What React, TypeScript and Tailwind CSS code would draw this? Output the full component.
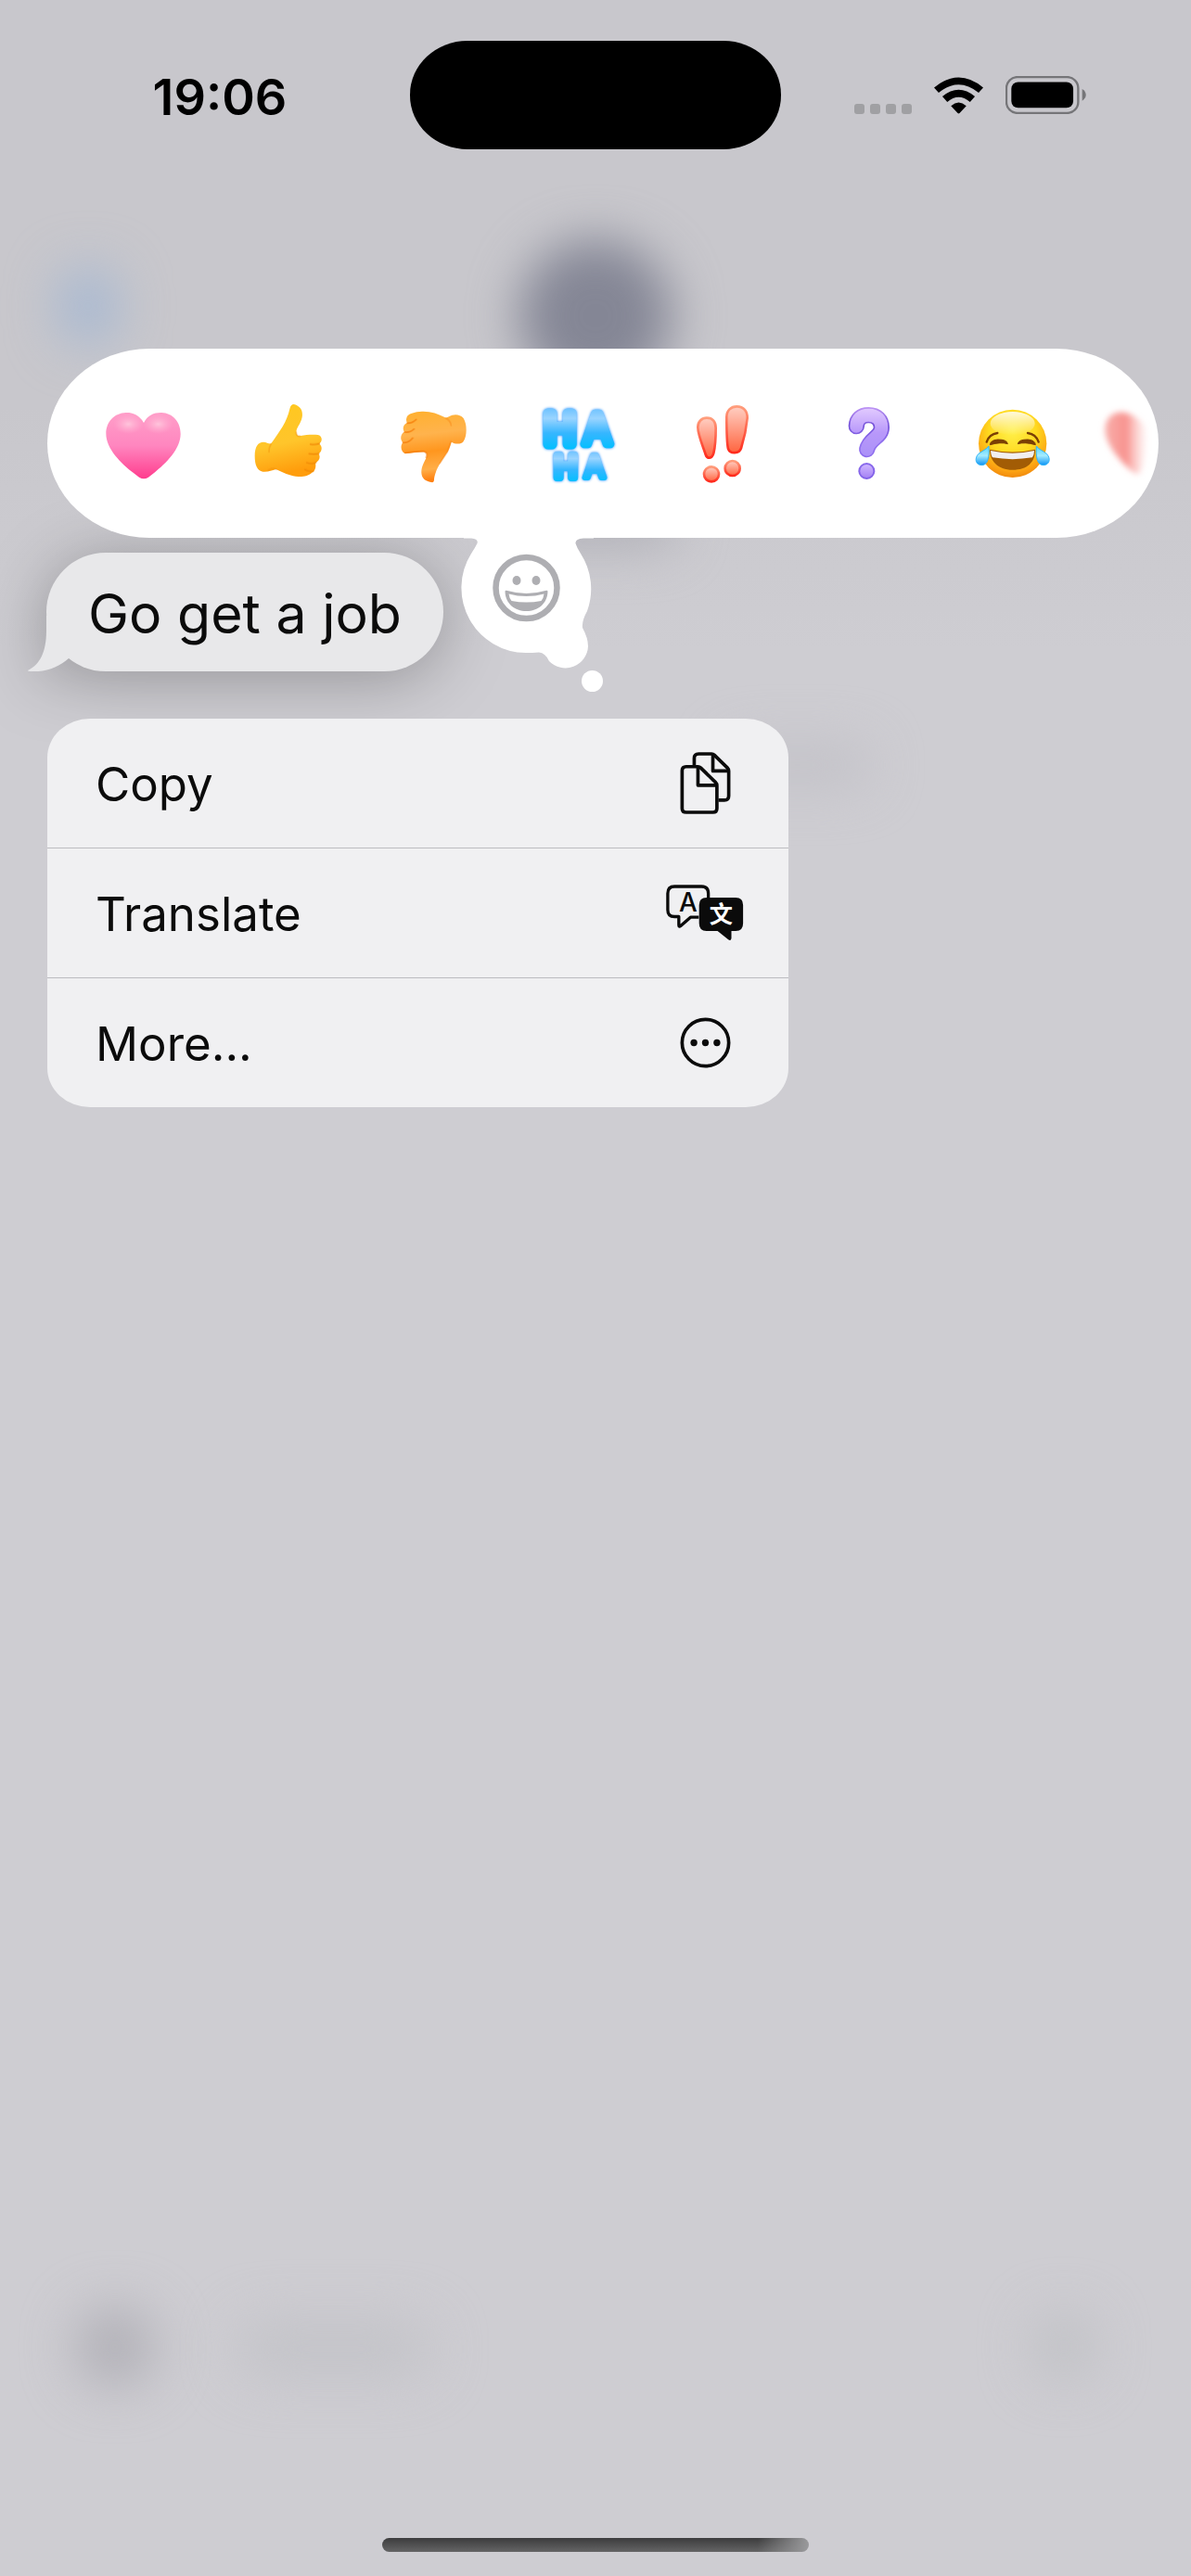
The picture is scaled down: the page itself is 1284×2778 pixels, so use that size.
import type { ReactNode } from "react";

const GlyphFrame = ({ viewBox, children }: { viewBox: string; children: ReactNode }) => (
  <svg viewBox={viewBox} className="h-[88px] w-20 overflow-visible" aria-hidden="true">
    {children}
  </svg>
);

const Heart = () => (
  <GlyphFrame viewBox="225 198 240 264">
    <defs>
      <linearGradient id="heartFill" x1="0" y1="0" x2="0" y2="1">
        <stop offset="0" stopColor="#ff9fc9" />
        <stop offset="0.5" stopColor="#ff86bf" />
        <stop offset="1" stopColor="#ff3d8e" />
      </linearGradient>
      <radialGradient id="heartShine">
        <stop offset="0" stopColor="#ffc4dc" />
        <stop offset="1" stopColor="#ffb0d2" stopOpacity="0" />
      </radialGradient>
    </defs>
    <path
      d="M345 258C330 230 305 224 287 225C250 226 223 255 223 293C223 350 290 405 330 434Q345 443 360 434C400 405 465 350 464 293C464 255 438 226 403 225C380 224 358 232 345 258Z"
      fill="url(#heartFill)"
    />
    <ellipse cx="295" cy="262" rx="48" ry="32" fill="url(#heartShine)" />
    <ellipse cx="392" cy="262" rx="48" ry="32" fill="url(#heartShine)" />
  </GlyphFrame>
);

const ThumbUp = () => (
  <GlyphFrame viewBox="693 198 240 264">
    <defs>
      <linearGradient id="thumbUpFill" x1="0" y1="0" x2="0.2" y2="1">
        <stop offset="0" stopColor="#ffc81f" />
        <stop offset="0.6" stopColor="#ffc52b" />
        <stop offset="1" stopColor="#ff9d0c" />
      </linearGradient>
    </defs>
    <path
      d="M757 325C785 285 808 255 817 213C820 198 828 195 838 200C855 208 860 222 857 240C853 262 838 272 838 290C840 300 846 302 852 300C870 296 895 296 908 297C922 299 925 318 912 326C924 332 922 352 910 358C917 366 915 380 900 388C903 400 899 415 890 418C880 430 860 433 845 432C815 430 795 418 772 408C760 412 745 418 730 416C712 412 704 395 704 365C704 335 715 320 732 320C742 320 750 327 757 325Z"
      fill="url(#thumbUpFill)"
    />
    <g fill="none" stroke="#f08a08" strokeWidth="5" strokeLinecap="round" opacity="0.8">
      <path d="M884 327Q900 329 913 325" />
      <path d="M880 358Q898 361 911 357" />
      <path d="M872 387Q888 394 902 386" />
      <path d="M866 409Q880 417 893 414" />
      <path d="M757 326Q749 338 750 352" opacity="0.5" />
      <path d="M748 411Q762 402 774 408" opacity="0.5" />
      <path d="M838 288Q838 302 850 301" opacity="0.6" />
    </g>
  </GlyphFrame>
);

const ThumbDown = () => (
  <GlyphFrame viewBox="234 198 240 264">
    <defs>
      <linearGradient id="thumbDownFill" x1="0" y1="0" x2="0.1" y2="1">
        <stop offset="0" stopColor="#ffb02e" />
        <stop offset="0.35" stopColor="#ffb34d" />
        <stop offset="0.6" stopColor="#ff961e" />
        <stop offset="0.85" stopColor="#ffae48" />
        <stop offset="1" stopColor="#ff8110" />
      </linearGradient>
    </defs>
    <path
      d="M393 241C370 228 345 220 318 221C295 222 270 228 268 242C266 248 267 254 270 259C256 262 254 280 261 287C248 293 246 312 256 322C248 330 248 350 262 357C280 357 305 352 322 351C332 351 336 358 333 368C325 385 315 400 316 420C317 438 330 447 347 450C355 452 357 447 357 440C360 410 385 375 401 352C408 338 411 325 413 320C425 328 445 328 452 318C464 300 464 262 452 243C440 228 418 229 405 238C400 241 396 242 393 241Z"
      fill="url(#thumbDownFill)"
    />
    <g fill="none" stroke="#f57c0a" strokeWidth="5" strokeLinecap="round" opacity="0.75">
      <path d="M270 259Q286 260 299 247" />
      <path d="M262 288Q280 290 292 278" />
      <path d="M257 322Q275 324 288 307" />
      <path d="M264 355Q300 350 322 350Q338 353 332 370" />
      <path d="M395 243Q411 252 412 266" opacity="0.5" />
      <path d="M412 318L400 352L376 388" opacity="0.5" />
    </g>
  </GlyphFrame>
);

const Haha = () => (
  <GlyphFrame viewBox="702 198 240 264">
    <defs>
      <linearGradient id="hahaTop" gradientUnits="userSpaceOnUse" x1="0" y1="210" x2="0" y2="345">
        <stop offset="0" stopColor="#6cc2ff" />
        <stop offset="0.25" stopColor="#9ad4ff" />
        <stop offset="0.6" stopColor="#36b6ff" />
        <stop offset="1" stopColor="#00c0ff" />
      </linearGradient>
      <linearGradient id="hahaBottom" gradientUnits="userSpaceOnUse" x1="0" y1="348" x2="0" y2="450">
        <stop offset="0" stopColor="#6cc2ff" />
        <stop offset="0.25" stopColor="#9ad4ff" />
        <stop offset="0.6" stopColor="#36b6ff" />
        <stop offset="1" stopColor="#00c0ff" />
      </linearGradient>
    </defs>
    <g
      className="font-['Inter',sans-serif] drop-shadow-[0_0_4px_#0a84ff]"
      textAnchor="middle"
      strokeLinejoin="round"
      strokeLinecap="round"
    >
      <text y="326" fontSize="134" fill="url(#hahaTop)" stroke="url(#hahaTop)" strokeWidth="33">
        <tspan x="764">H</tspan>
        <tspan x="885" strokeWidth="25">A</tspan>
      </text>
      <text y="436" fontSize="98" fill="url(#hahaBottom)" stroke="url(#hahaBottom)" strokeWidth="24">
        <tspan x="783">H</tspan>
        <tspan x="876" strokeWidth="18">A</tspan>
      </text>
    </g>
  </GlyphFrame>
);

const Exclaim = () => (
  <GlyphFrame viewBox="180 198 240 264">
    <defs>
      <linearGradient id="exFill" x1="0" y1="0" x2="0" y2="1">
        <stop offset="0" stopColor="#ffcfc3" />
        <stop offset="1" stopColor="#ff6540" />
      </linearGradient>
      <linearGradient id="exEdge" x1="0" y1="0" x2="0" y2="1">
        <stop offset="0" stopColor="#ff9d7c" />
        <stop offset="1" stopColor="#ff2a1c" />
      </linearGradient>
    </defs>
    <g fill="url(#exFill)" stroke="url(#exEdge)" strokeWidth="8">
      <path d="M249 242C268 242 278 255 278 275C278 310 275 340 271 356C266 375 250 376 245 360C236 333 220 295 220 272C220 255 232 242 249 242Z" />
      <path d="M346 205C368 205 381 220 380 243C377 275 367 318 360 340C354 358 325 360 318 342C313 320 313 270 313 240C313 218 327 205 346 205Z" />
      <circle cx="264" cy="424" r="24" />
      <circle cx="332" cy="405" r="24" />
    </g>
  </GlyphFrame>
);

const Question = () => (
  <GlyphFrame viewBox="648 198 240 264">
    <defs>
      <linearGradient id="qFill" gradientUnits="userSpaceOnUse" x1="0" y1="208" x2="0" y2="442">
        <stop offset="0" stopColor="#e3ccff" />
        <stop offset="0.35" stopColor="#b898fa" />
        <stop offset="0.7" stopColor="#aa90f8" />
        <stop offset="0.8" stopColor="#ccb2ff" />
        <stop offset="1" stopColor="#a07cf2" />
      </linearGradient>
      <linearGradient id="qEdge" gradientUnits="userSpaceOnUse" x1="0" y1="208" x2="0" y2="442">
        <stop offset="0" stopColor="#bd94f4" />
        <stop offset="0.25" stopColor="#7350d8" />
        <stop offset="0.5" stopColor="#9272f0" />
        <stop offset="1" stopColor="#8262e8" />
      </linearGradient>
    </defs>
    <g fill="none" strokeLinecap="round">
      <path d="M733 269C734 245 749 233 772 233C799 233 814 249 814 273C814 305 774 308 767 344" stroke="url(#qEdge)" strokeWidth="52" />
      <path d="M733 269C734 245 749 233 772 233C799 233 814 249 814 273C814 305 774 308 767 344" stroke="url(#qFill)" strokeWidth="42" />
    </g>
    <circle cx="766" cy="414" r="24" fill="url(#qFill)" stroke="url(#qEdge)" strokeWidth="6" />
  </GlyphFrame>
);

const Joy = () => (
  <GlyphFrame viewBox="216 228 240 264">
    <defs>
      <radialGradient id="joyFill" cx="0.5" cy="0.32" r="0.7">
        <stop offset="0" stopColor="#fff04a" />
        <stop offset="0.5" stopColor="#ffd91f" />
        <stop offset="0.85" stopColor="#fba012" />
        <stop offset="1" stopColor="#ee850c" />
      </radialGradient>
      <linearGradient id="joyShine" x1="0" y1="0" x2="0" y2="1">
        <stop offset="0" stopColor="#fff" stopOpacity="0.85" />
        <stop offset="1" stopColor="#fff" stopOpacity="0" />
      </linearGradient>
      <linearGradient id="tearFill" x1="0" y1="0" x2="0" y2="1">
        <stop offset="0" stopColor="#4fd4ff" />
        <stop offset="0.5" stopColor="#a5ecff" />
        <stop offset="1" stopColor="#0a93f5" />
      </linearGradient>
    </defs>
    <circle cx="338" cy="355" r="110" fill="url(#joyFill)" />
    <ellipse cx="338" cy="290" rx="72" ry="38" fill="url(#joyShine)" />
    <g fill="none" stroke="#7a3f05" strokeLinecap="round" strokeWidth="7">
      <path d="M254 350Q262 325 289 321" />
      <path d="M422 350Q414 325 387 321" />
    </g>
    <path d="M265 359Q266 344 290 342Q320 342 322 356Q300 349 265 359Z" fill="#7a3f05" stroke="#7a3f05" strokeWidth="3" />
    <path d="M412 359Q411 344 387 342Q357 342 355 356Q377 349 412 359Z" fill="#7a3f05" stroke="#7a3f05" strokeWidth="3" />
    <path d="M264 374Q338 391 411 374C412 415 385 440 338 440C290 440 264 410 264 374Z" fill="#a25c05" />
    <path d="M267 378Q338 394 408 378Q408 393 402 400Q338 411 273 400Q268 394 267 378Z" fill="#f1eff0" />
    <path d="M261 363C263 395 260 425 238 425C217 424 214 402 228 388C240 378 254 374 261 363Z" fill="url(#tearFill)" stroke="#35b4f8" strokeWidth="3" />
    <path d="M415 363C413 395 416 425 438 425C459 424 462 402 448 388C436 378 422 374 415 363Z" fill="url(#tearFill)" stroke="#35b4f8" strokeWidth="3" />
  </GlyphFrame>
);

const FadingHeart = () => (
  <GlyphFrame viewBox="686 228 240 264">
    <defs>
      <linearGradient id="fadeX" gradientUnits="userSpaceOnUse" x1="640" y1="0" x2="775" y2="0">
        <stop offset="0" stopColor="#f8aeaa" />
        <stop offset="0.5" stopColor="#f8928e" />
        <stop offset="1" stopColor="#fbc5c3" stopOpacity="0.1" />
      </linearGradient>
      <filter id="softEdge" x="-40%" y="-40%" width="180%" height="180%">
        <feGaussianBlur stdDeviation="10" />
      </filter>
    </defs>
    <path
      d="M685 254C655 256 638 282 639 312C641 365 700 425 738 454C748 458 757 445 760 430C772 380 772 330 768 300C745 268 712 252 685 254Z"
      fill="url(#fadeX)"
      filter="url(#softEdge)"
    />
  </GlyphFrame>
);

const CopyIcon = () => (
  <svg viewBox="130 95 164 200" className="h-[67px] w-[55px]" fill="none" stroke="#0b0b0b" strokeWidth="11" strokeLinejoin="round" aria-hidden="true">
    <path d="M176 139V115Q176 101 190 101H232Q237 101 241 105L283 146Q287 150 287 156V236Q287 250 273 250H254" />
    <path d="M236 103V156H286" />
    <path d="M150 142H188Q193 142 197 146L245 193Q249 197 249 203V276Q249 289 236 289H150Q137 289 137 276V155Q137 142 150 142Z" />
    <path d="M188 143V202H248" />
  </svg>
);

const TranslateIcon = () => (
  <svg viewBox="87 526 252 184" className="h-[61px] w-[84px]" aria-hidden="true">
    <path
      d="M224 568V555Q224 532 202 532H114Q92 532 92 555V608Q92 630 114 630H128V657Q128 665 134 660L166 632H193"
      fill="none"
      stroke="#0b0b0b"
      strokeWidth="10"
      strokeLinejoin="round"
    />
    <text x="158" y="612" textAnchor="middle" fontSize="84" className="fill-[#0b0b0b] font-['Inter',sans-serif] font-medium">A</text>
    <path d="M218 568H313Q337 568 337 592V652Q337 677 313 677H299V700Q298 710 289 705L254 677H218Q194 677 194 652V592Q194 568 218 568Z" fill="#0b0b0b" />
    <text x="265" y="650" textAnchor="middle" fontSize="76" className="fill-white font-['Noto_Sans_CJK_SC',sans-serif] font-bold">文</text>
  </svg>
);

const MoreIcon = () => (
  <svg viewBox="130 951 164 164" className="h-[55px] w-[55px]" aria-hidden="true">
    <circle cx="212" cy="1033" r="75" fill="none" stroke="#0b0b0b" strokeWidth="11" />
    <g fill="#0b0b0b">
      <circle cx="175" cy="1033" r="11" />
      <circle cx="212" cy="1033" r="11" />
      <circle cx="249" cy="1033" r="11" />
    </g>
  </svg>
);

const ThoughtBubble = () => (
  <svg viewBox="490 576 170 172" className="h-[172px] w-[170px]" aria-hidden="true">
    <g fill="#fff">
      <path d="M500 576H640V580.5H629Q620 581 620.5 586Q622 591 626 597A70 70 0 0 1 633 659Q627 670 628 677Q634 688 634 697A24.500 24.500 0 0 1 592 713Q588 704 581 703.500Q574 704 567 704A70 70 0 0 1 508 597Q512 591 514.500 586Q516 581 508 580.500H500Z" />
      <circle cx="638.500" cy="734.500" r="11.500" />
    </g>
    <circle cx="567.500" cy="634" r="33" fill="none" stroke="#aeaeb2" strokeWidth="6.500" />
    <g fill="#aeaeb2">
      <ellipse cx="557" cy="626" rx="4.500" ry="5" />
      <ellipse cx="578" cy="626" rx="4.500" ry="5" />
      <path d="M544.500 638Q544.500 636 547 637Q567.500 643 588 637Q590.500 636 590.500 638C590 651 580 659 567.500 659C555 659 545 651 544.500 638Z" />
    </g>
    <path d="M548.500 640.500Q567.500 645.500 586.500 640.500Q586 645 583.500 648Q567.500 651 551.500 648Q549 645 548.500 640.500Z" fill="#fff" />
  </svg>
);

const reactions = [
  { label: "Love", icon: <Heart /> },
  { label: "Like", icon: <ThumbUp /> },
  { label: "Dislike", icon: <ThumbDown /> },
  { label: "Laugh", icon: <Haha /> },
  { label: "Emphasize", icon: <Exclaim /> },
  { label: "Question", icon: <Question /> },
  { label: "Tears of joy", icon: <Joy /> },
  { label: "Red heart", icon: <FadingHeart /> },
];

const actions = [
  { label: "Copy", icon: <CopyIcon /> },
  { label: "Translate", icon: <TranslateIcon /> },
  { label: "More...", icon: <MoreIcon /> },
];

const StatusBar = () => (
  <header className="grid h-[117px] grid-cols-[1fr_400px_1fr] items-center">
    <time className="mt-1 ml-8 justify-self-center text-[54px] leading-none font-semibold text-black">19:06</time>
    <div className="h-full rounded-[62px/58px] bg-black" />
    <div className="mr-[34px] flex items-end justify-self-center">
      <div className="mr-6 flex gap-[6px]">
        <i className="size-[11px] rounded-[3px] bg-[#a0a0a3]" />
        <i className="size-[11px] rounded-[3px] bg-[#a0a0a3]" />
        <i className="size-[11px] rounded-[3px] bg-[#a0a0a3]" />
        <i className="size-[11px] rounded-[3px] bg-[#a0a0a3]" />
      </div>
      <svg viewBox="320 70 160 120" className="mr-6 h-10 w-[53px]" aria-hidden="true">
        <path d="M320 104Q400 38 480 104L465 121Q400 68 335 121Z" />
        <path d="M347 133Q400 89 453 133L437 151Q400 119 363 151Z" />
        <path d="M375 164Q400 142 425 164L403 187Q400 190 397 187Z" />
      </svg>
      <svg viewBox="552 68 262 123" className="h-[41px] w-[87px]" aria-hidden="true">
        <rect x="555" y="71" width="233" height="117" rx="36" fill="none" stroke="#757578" strokeWidth="7" />
        <rect x="571" y="87" width="201" height="84" rx="22" />
        <path d="M801 110Q813 117 813 129Q813 141 801 148Z" fill="#757578" />
      </svg>
    </div>
  </header>
);

const Backdrop = () => (
  <div className="pointer-events-none absolute inset-0 overflow-hidden" aria-hidden="true">
    <div className="absolute top-[258px] left-1/2 size-[165px] -translate-x-1/2 rounded-full bg-[#848695] blur-[26px]" />
    <div className="absolute top-[290px] left-[65px] h-20 w-[60px] rounded-full bg-[#a2b6d2] blur-[28px]" />
    <div className="absolute top-[540px] left-[560px] h-[50px] w-[170px] rounded-full bg-[#b0b0b7] blur-[26px]" />
    <div className="absolute top-[800px] left-[780px] h-[50px] w-[160px] rounded-full bg-[#c3c2c8] blur-[26px]" />
    <div className="absolute bottom-[205px] left-[82px] size-[84px] rounded-full bg-[#afaeb5] blur-[28px]" />
    <div className="absolute bottom-[215px] left-[255px] h-[60px] w-[210px] rounded-full bg-[#c3c3c8] blur-[28px]" />
    <div className="absolute right-[105px] bottom-[212px] h-[70px] w-[64px] rounded-full bg-[#bfc0c4] blur-[28px]" />
  </div>
);

export default function App() {
  return (
    <div className="relative flex min-h-screen flex-col bg-[linear-gradient(#c8c7cc_0,#c8c7cc_440px,#cecdd2_700px)] pt-11 font-['Inter',sans-serif] text-[#0b0b0b]">
      <Backdrop />
      <div className="relative flex flex-1 flex-col">
        <StatusBar />

        <div className="relative z-10 mt-[215px] mr-[35px] ml-[51px] h-[204px] overflow-hidden rounded-[110px/102px] bg-white">
          <div className="flex h-full items-center pl-[26px]">
            {reactions.map(({ label, icon }) => (
              <button key={label} type="button" aria-label={label} className="flex w-[156px] shrink-0 justify-center pt-1">
                {icon}
              </button>
            ))}
          </div>
        </div>

        <main>
          <div className="flex items-start pl-[50px]">
            <div className="relative mt-4 flex h-32 items-center rounded-[64px] bg-[#e8e8ea] px-[45px] drop-shadow-[0_8px_34px_rgba(0,0,0,0.28)]">
              <svg viewBox="30 664 60 60" className="absolute bottom-0 -left-5 size-[60px]" aria-hidden="true">
                <path d="M50 664V680C50 703 43 717 30 723Q30 724 34 724C50 725 64 719 74 710L90 690V664Z" fill="#e8e8ea" />
              </svg>
              <p className="relative pt-[2px] text-[59px] leading-none whitespace-nowrap">Go get a job</p>
            </div>
            <button type="button" aria-label="Add emoji reaction" className="relative z-20 -mt-1 ml-3">
              <ThoughtBubble />
            </button>
          </div>

          <ul className="relative mt-[27px] ml-[51px] w-[799px] max-w-[90%] divide-y divide-[#bcbcc0] overflow-hidden rounded-[46px/42px] bg-[#f0f0f2]">
            {actions.map(({ label, icon }) => (
              <li key={label}>
                <button type="button" className="flex h-[139px] w-full items-center justify-between pr-12 pl-[52px] text-left text-[51px] leading-none">
                  <span className="pt-[2px]">{label}</span>
                  <span className="flex w-[84px] justify-center">{icon}</span>
                </button>
              </li>
            ))}
          </ul>
        </main>

        <div className="mx-auto mt-auto mb-[26px] h-[15px] w-[460px] rounded-full bg-[linear-gradient(90deg,transparent_88%,#9a9a9c),linear-gradient(#3c3c3d,#646465)]" />
      </div>
    </div>
  );
}
